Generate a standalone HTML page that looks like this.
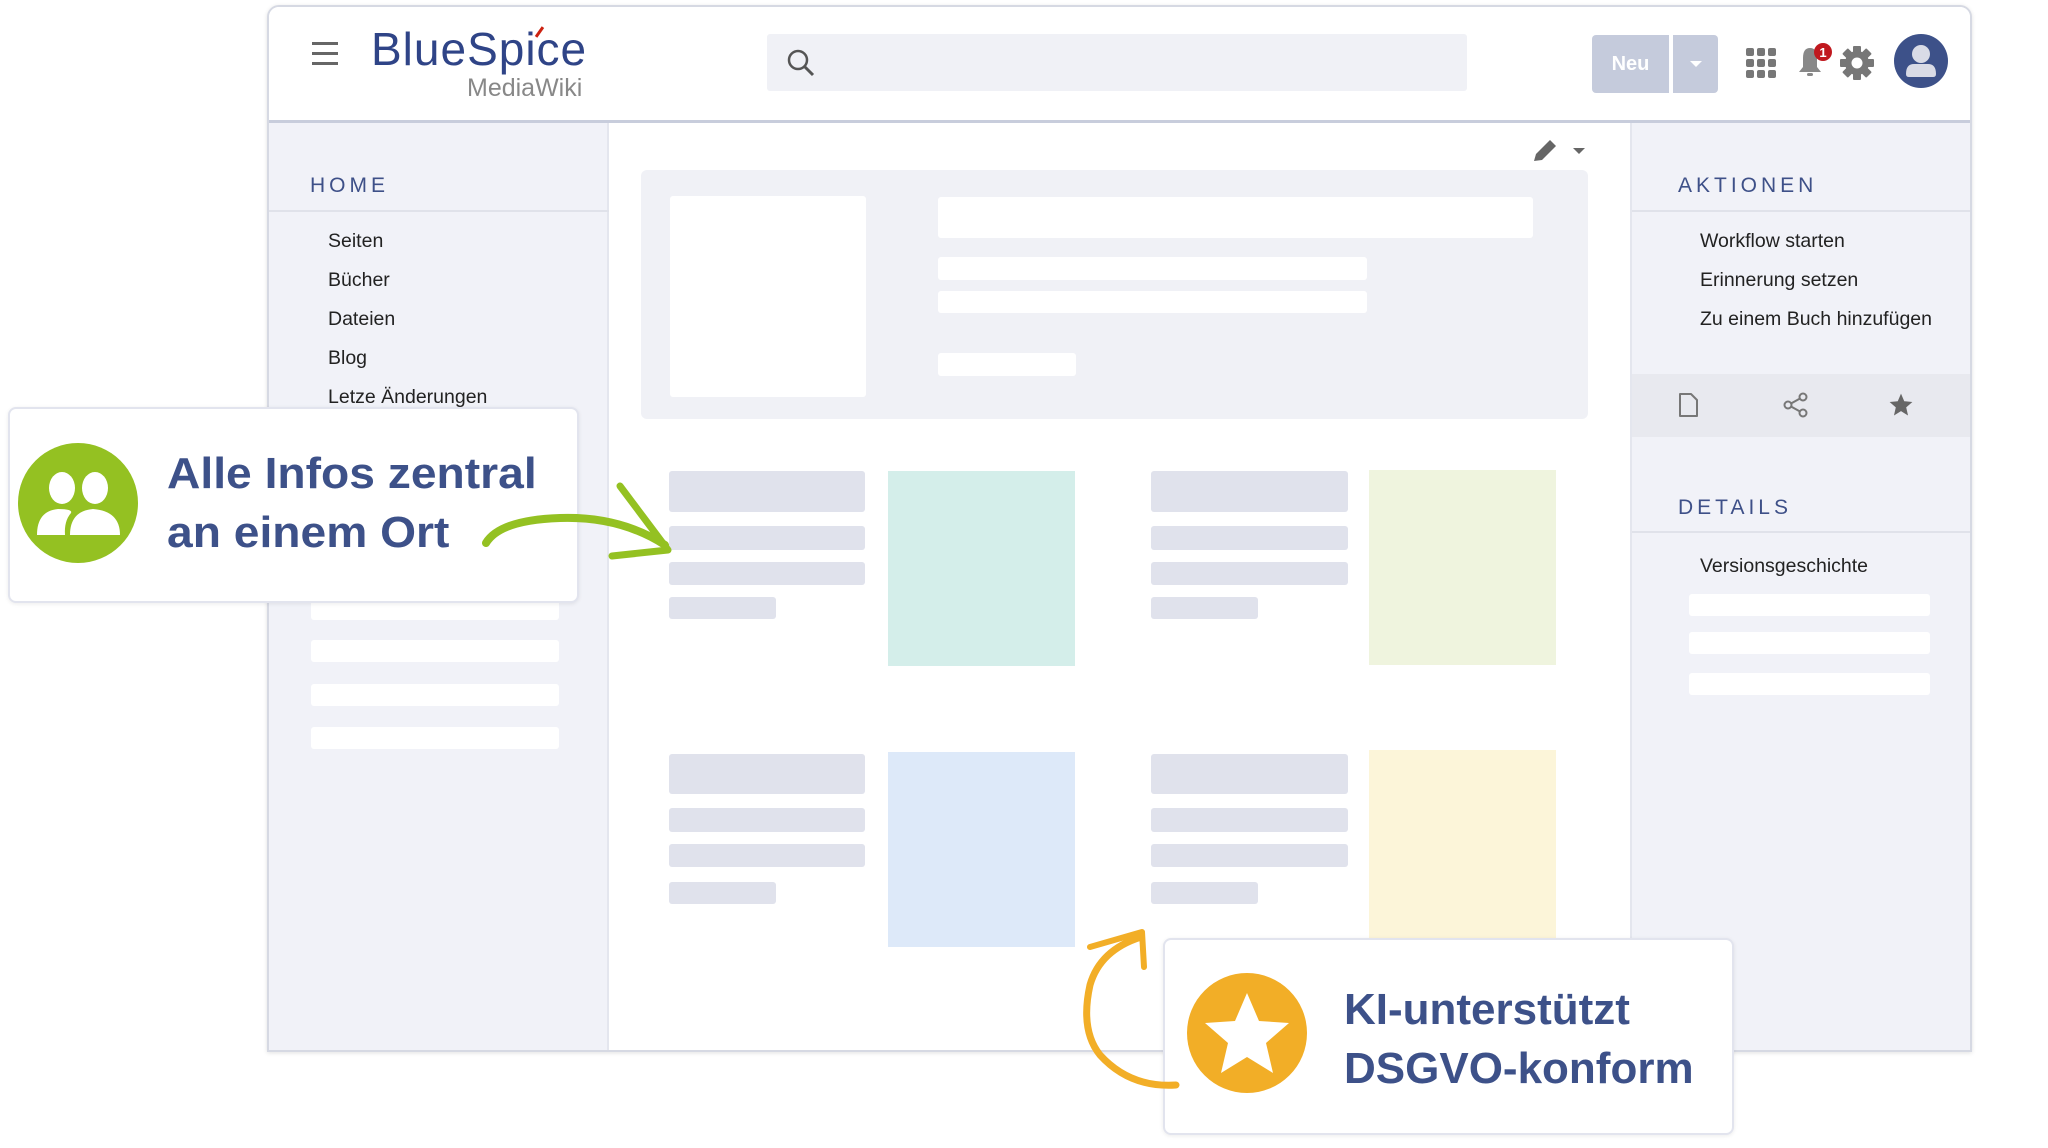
<!DOCTYPE html>
<html><head><meta charset="utf-8"><style>
*{margin:0;padding:0;box-sizing:border-box}
body{width:2048px;height:1148px;background:#fff;position:relative;overflow:hidden;font-family:"Liberation Sans",sans-serif}
.a{position:absolute}
.frame{left:267px;top:5px;width:1705px;height:1047px;border:2px solid #d6d9e3;border-radius:12px 12px 0 0;background:#fff;box-shadow:0 1px 4px rgba(0,0,0,.12);overflow:hidden}
.side{background:#f1f2f8}
.bar{background:#e0e2ec;border-radius:3px}
.wb{background:#fff;border-radius:3px}
.hd{font-size:21px;letter-spacing:4px;color:#3e5088}
.it{font-size:19.5px;color:#222;line-height:20px}
.call{background:#fff;border:2px solid #e2e4ee;border-radius:8px;box-shadow:0 1px 4px rgba(0,0,0,.08)}
.ct{font-weight:bold;color:#3d5189;font-size:44px;line-height:59px;white-space:nowrap;transform-origin:0 0}
</style></head><body>
<div class="a frame"></div>
<div class="a side" style="left:269px;top:122px;width:340px;height:928px;border-right:2px solid #e4e6ee"></div>
<div class="a side" style="left:1630px;top:122px;width:340px;height:928px;border-left:2px solid #e4e6ee"></div>
<div class="a" style="left:269px;top:7px;width:1701px;height:116px;background:#fff;border-bottom:3px solid #c8cddc;border-radius:10px 10px 0 0"></div>
<div class="a" style="left:312px;top:42px;width:26px;height:3px;background:#666;box-shadow:0 10px 0 #666,0 20px 0 #666"></div>
<div class="a" style="left:371px;top:22px;font-size:46px;color:#2f4487;letter-spacing:1px">BlueSpice</div>
<div class="a" style="left:538px;top:26px;width:3px;height:12px;background:#c21;transform:rotate(35deg)"></div>
<div class="a" style="left:467px;top:74px;font-size:25px;color:#888">MediaWiki</div>
<div class="a" style="left:767px;top:34px;width:700px;height:57px;background:#f0f1f6;border-radius:3px"></div>
<svg class="a" style="left:786px;top:48px" width="30" height="30" viewBox="0 0 30 30"><circle cx="12" cy="12" r="9" fill="none" stroke="#555" stroke-width="2.5"/><line x1="18.5" y1="18.5" x2="27" y2="27" stroke="#555" stroke-width="3"/></svg>
<div class="a" style="left:1592px;top:35px;width:77px;height:58px;background:#c5cbdc;border-radius:4px 0 0 4px;color:#fff;font-weight:bold;font-size:20px;text-align:center;line-height:58px">Neu</div>
<div class="a" style="left:1673px;top:35px;width:45px;height:58px;background:#c5cbdc;border-radius:0 4px 4px 0"></div>
<div class="a" style="left:1690px;top:61px;border:6px solid transparent;border-top:6px solid #fff"></div>
<svg class="a" style="left:1746px;top:48px" width="30" height="30"><g fill="#777"><rect x="0" y="0" width="8" height="8" rx="2"/><rect x="11" y="0" width="8" height="8" rx="2"/><rect x="22" y="0" width="8" height="8" rx="2"/><rect x="0" y="11" width="8" height="8" rx="2"/><rect x="11" y="11" width="8" height="8" rx="2"/><rect x="22" y="11" width="8" height="8" rx="2"/><rect x="0" y="22" width="8" height="8" rx="2"/><rect x="11" y="22" width="8" height="8" rx="2"/><rect x="22" y="22" width="8" height="8" rx="2"/></g></svg>
<svg class="a" style="left:1795px;top:40px" width="40" height="40"><path d="M4 32 L8 27 L8 18 Q8 8 15 8 Q22 8 22 18 L22 27 L26 32 Z" fill="#888"/><rect x="12" y="33" width="6" height="3" rx="1.5" fill="#888"/><circle cx="28" cy="12" r="9" fill="#c0181e"/><text x="28" y="17" font-size="13" font-weight="bold" fill="#fff" text-anchor="middle" font-family="Liberation Sans">1</text></svg>
<svg class="a" style="left:1840px;top:46px" width="34" height="34" viewBox="0 0 34 34"><g fill="#777" transform="translate(17 17)"><rect x="-4" y="-17" width="8" height="34" rx="1"/><rect x="-4" y="-17" width="8" height="34" rx="1" transform="rotate(45)"/><rect x="-4" y="-17" width="8" height="34" rx="1" transform="rotate(90)"/><rect x="-4" y="-17" width="8" height="34" rx="1" transform="rotate(135)"/><circle r="12"/></g><circle cx="17" cy="17" r="5.5" fill="#fff"/></svg>
<svg class="a" style="left:1894px;top:34px" width="54" height="54"><circle cx="27" cy="27" r="27" fill="#3d5189"/><circle cx="27" cy="20" r="9" fill="#d9dbe6"/><path d="M12 40 Q12 30 20 30 L34 30 Q42 30 42 40 Q42 43 39 43 L15 43 Q12 43 12 40Z" fill="#d9dbe6"/></svg>

<div class="a hd" style="left:310px;top:174px">HOME</div>
<div class="a" style="left:269px;top:210px;width:340px;height:2px;background:#e0e2ea"></div>
<div class="a it" style="left:328px;top:231px">Seiten</div>
<div class="a it" style="left:328px;top:270px">Bücher</div>
<div class="a it" style="left:328px;top:309px">Dateien</div>
<div class="a it" style="left:328px;top:348px">Blog</div>
<div class="a it" style="left:328px;top:387px">Letze Änderungen</div>
<div class="a wb" style="left:311px;top:598px;width:248px;height:22px"></div>
<div class="a wb" style="left:311px;top:640px;width:248px;height:22px"></div>
<div class="a wb" style="left:311px;top:684px;width:248px;height:22px"></div>
<div class="a wb" style="left:311px;top:727px;width:248px;height:22px"></div>

<div class="a hd" style="left:1678px;top:174px">AKTIONEN</div>
<div class="a" style="left:1632px;top:210px;width:338px;height:2px;background:#e0e2ea"></div>
<div class="a it" style="left:1700px;top:231px">Workflow starten</div>
<div class="a it" style="left:1700px;top:270px">Erinnerung setzen</div>
<div class="a it" style="left:1700px;top:309px">Zu einem Buch hinzufügen</div>
<div class="a" style="left:1632px;top:374px;width:338px;height:63px;background:#e8e9ef"></div>
<svg class="a" style="left:1678px;top:392px" width="22" height="26"><path d="M2 2 L13 2 L19 8 L19 24 L2 24 Z" fill="none" stroke="#777" stroke-width="2" stroke-linejoin="round"/></svg>
<svg class="a" style="left:1782px;top:391px" width="28" height="28"><g fill="none" stroke="#777" stroke-width="2"><circle cx="21" cy="6" r="3.5"/><circle cx="6" cy="14" r="3.5"/><circle cx="21" cy="22" r="3.5"/><line x1="9" y1="12.5" x2="18" y2="7.5"/><line x1="9" y1="15.5" x2="18" y2="20.5"/></g></svg>
<svg class="a" style="left:1888px;top:392px" width="26" height="26" viewBox="0 0 24 24"><path d="M12 1.5 L15 8.5 L22.5 9.2 L16.8 14.2 L18.5 21.7 L12 17.7 L5.5 21.7 L7.2 14.2 L1.5 9.2 L9 8.5Z" fill="#666"/></svg>
<div class="a hd" style="left:1678px;top:496px">DETAILS</div>
<div class="a" style="left:1632px;top:531px;width:338px;height:2px;background:#e0e2ea"></div>
<div class="a it" style="left:1700px;top:556px">Versionsgeschichte</div>
<div class="a wb" style="left:1689px;top:594px;width:241px;height:22px"></div>
<div class="a wb" style="left:1689px;top:632px;width:241px;height:22px"></div>
<div class="a wb" style="left:1689px;top:673px;width:241px;height:22px"></div>

<svg class="a" style="left:1530px;top:137px" width="60" height="28"><path d="M4 24 L6 17 L20 3 L26 9 L12 23 Z" fill="#666"/><path d="M43 11 L55 11 L49 17Z" fill="#666"/></svg>
<div class="a" style="left:641px;top:170px;width:947px;height:249px;background:#f0f1f6;border-radius:6px"></div>
<div class="a wb" style="left:670px;top:196px;width:196px;height:201px"></div>
<div class="a wb" style="left:938px;top:197px;width:595px;height:41px"></div>
<div class="a wb" style="left:938px;top:257px;width:429px;height:23px"></div>
<div class="a wb" style="left:938px;top:291px;width:429px;height:22px"></div>
<div class="a wb" style="left:938px;top:353px;width:138px;height:23px"></div>

<div class="a bar" style="left:669px;top:471px;width:196px;height:41px"></div>
<div class="a bar" style="left:669px;top:526px;width:196px;height:24px"></div>
<div class="a bar" style="left:669px;top:562px;width:196px;height:23px"></div>
<div class="a bar" style="left:669px;top:597px;width:107px;height:22px"></div>
<div class="a" style="left:888px;top:471px;width:187px;height:195px;background:#d4eeea"></div>
<div class="a bar" style="left:1151px;top:471px;width:197px;height:41px"></div>
<div class="a bar" style="left:1151px;top:526px;width:197px;height:24px"></div>
<div class="a bar" style="left:1151px;top:562px;width:197px;height:23px"></div>
<div class="a bar" style="left:1151px;top:597px;width:107px;height:22px"></div>
<div class="a" style="left:1369px;top:470px;width:187px;height:195px;background:#eff4de"></div>

<div class="a bar" style="left:669px;top:754px;width:196px;height:40px"></div>
<div class="a bar" style="left:669px;top:808px;width:196px;height:24px"></div>
<div class="a bar" style="left:669px;top:844px;width:196px;height:23px"></div>
<div class="a bar" style="left:669px;top:882px;width:107px;height:22px"></div>
<div class="a" style="left:888px;top:752px;width:187px;height:195px;background:#dde9f9"></div>
<div class="a bar" style="left:1151px;top:754px;width:197px;height:40px"></div>
<div class="a bar" style="left:1151px;top:808px;width:197px;height:24px"></div>
<div class="a bar" style="left:1151px;top:844px;width:197px;height:23px"></div>
<div class="a bar" style="left:1151px;top:882px;width:107px;height:22px"></div>
<div class="a" style="left:1369px;top:750px;width:187px;height:200px;background:#fcf5d9"></div>

<div class="a call" style="left:8px;top:407px;width:571px;height:196px"></div>
<svg class="a" style="left:18px;top:443px" width="122" height="122"><ellipse cx="60" cy="60" rx="60" ry="60" fill="#94c122"/><ellipse cx="44" cy="45" rx="13" ry="16" fill="#fff"/><ellipse cx="77" cy="45" rx="13" ry="16" fill="#fff"/><path d="M19 92 Q19 68 40 66 Q55 66 53 70 Q46 78 47 92Z" fill="#fff"/><path d="M52 92 Q52 68 75 66 Q102 68 102 92Z" fill="#fff"/></svg>
<div class="a ct" style="left:167px;top:444px;transform:scaleX(1.05)">Alle Infos zentral<br>an einem Ort</div>

<div class="a call" style="left:1163px;top:938px;width:571px;height:197px"></div>
<svg class="a" style="left:1187px;top:973px" width="122" height="122"><circle cx="60" cy="60" r="60" fill="#f2ae27"/><path d="M60 20 L72 48 L102 50 L79 70 L86 100 L60 84 L34 100 L41 70 L18 50 L48 48Z" fill="#fff"/></svg>
<div class="a ct" style="left:1344px;top:980px;transform:scaleX(1.0)">KI-unterstützt<br>DSGVO-konform</div>

<svg class="a" style="left:0;top:0" width="2048" height="1148">
<path d="M486 543 Q500 520 560 518 Q620 516 665 545" fill="none" stroke="#94c122" stroke-width="8" stroke-linecap="round"/>
<path d="M620 486 L668 550 L612 556" fill="none" stroke="#94c122" stroke-width="7" stroke-linecap="round" stroke-linejoin="round"/>
<path d="M1176 1085 Q1130 1088 1100 1055 Q1080 1030 1090 985 Q1100 950 1141 937" fill="none" stroke="#f2ae27" stroke-width="7" stroke-linecap="round"/>
<path d="M1090 947 L1142 932 L1144 967" fill="none" stroke="#f2ae27" stroke-width="6" stroke-linecap="round" stroke-linejoin="round"/>
</svg>
</body></html>
